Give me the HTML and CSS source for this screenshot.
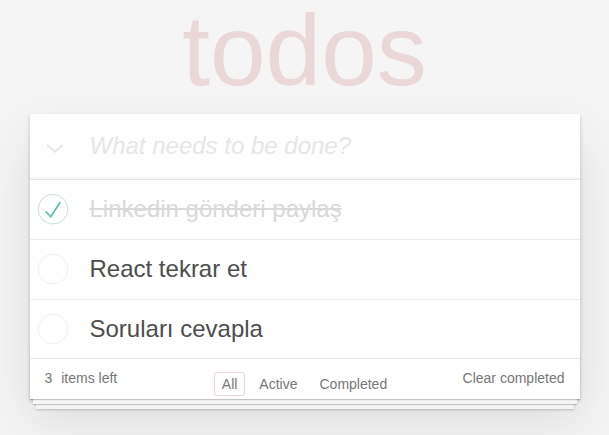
FILE: index.html
```html
<!DOCTYPE html>
<html lang="tr">
<head>
<meta charset="utf-8">
<title>todos</title>
<link rel="stylesheet" href="styles.css">
</head>
<body>
<div class="app">
  <h1 class="title">todos</h1>
  <section class="card">
    <header class="header">
      <div class="toggle-all">
        <svg width="18" height="9" viewBox="0 0 18 9"><polyline points="1,1 9,7.5 17,1" fill="none" stroke="#e6e6e6" stroke-width="2.2"/></svg>
      </div>
      <input class="new-todo" placeholder="What needs to be done?">
    </header>
    <ul class="todo-list">
      <li class="todo completed">
        <svg class="check" width="40" height="40" viewBox="-10 -18 100 135"><circle cx="50" cy="50" r="50" fill="none" stroke="#bddad5" stroke-width="3"/><path fill="#5dc2af" d="M72 25L42 71 27 56l-4 4 20 20 34-52z"/></svg>
        <span class="label">Linkedin gönderi paylaş</span>
      </li>
      <li class="todo">
        <svg class="check" width="40" height="40" viewBox="-10 -18 100 135"><circle cx="50" cy="50" r="50" fill="none" stroke="#ededed" stroke-width="3"/></svg>
        <span class="label">React tekrar et</span>
      </li>
      <li class="todo">
        <svg class="check" width="40" height="40" viewBox="-10 -18 100 135"><circle cx="50" cy="50" r="50" fill="none" stroke="#ededed" stroke-width="3"/></svg>
        <span class="label">Soruları cevapla</span>
      </li>
    </ul>
    <footer class="footer">
      <span class="todo-count"><strong>3</strong> items left</span>
      <ul class="filters">
        <li><a class="selected" href="#/">All</a></li>
        <li><a href="#/active">Active</a></li>
        <li><a href="#/completed">Completed</a></li>
      </ul>
      <span class="clear-completed">Clear completed</span>
    </footer>
  </section>
</div>
</body>
</html>
```
FILE: styles.css
```css
html {
  margin: 0;
  padding: 0;
  background: #f5f5f5;
  min-height: 100%;
}
body {
  margin: 0;
  padding: 0;
  min-height: 100vh;
  background: #f5f5f5;
  font-family: "Liberation Sans", Arial, sans-serif;
  font-size: 14px;
  color: #4d4d4d;
  font-weight: 300;
}
.app {
  width: 550px;
  margin: 0 auto;
  padding-bottom: 40px;
}
.title {
  margin: 0 0 14px 0;
  font-size: 100px;
  line-height: 100px;
  font-weight: 100;
  text-align: center;
  color: rgba(175, 47, 47, 0.15);
}
.card {
  position: relative;
  background: #fff;
  box-shadow: 0 2px 4px 0 rgba(0, 0, 0, 0.2), 0 25px 50px 0 rgba(0, 0, 0, 0.1);
}
.header {
  display: flex;
  align-items: flex-start;
  height: 65px;
  box-shadow: inset 0 -2px 1px rgba(0, 0, 0, 0.03);
  background: rgba(0, 0, 0, 0.003);
}
.toggle-all {
  width: 60px;
  flex: none;
  padding-top: 30px;
  box-sizing: border-box;
  padding-left: 16px;
  display: flex;
}
.new-todo {
  flex: 1;
  min-width: 0;
  height: 65px;
  box-sizing: border-box;
  padding: 15px 16px 16px 0;
  margin: 0;
  border: none;
  outline: none;
  background: transparent;
  font-family: inherit;
  font-size: 24px;
  line-height: 1.4em;
  font-weight: 300;
  color: inherit;
}
.new-todo::placeholder {
  font-style: italic;
  font-weight: 300;
  color: #e6e6e6;
}
.todo-list {
  list-style: none;
  margin: 0;
  padding: 0;
  border-top: 1px solid #e6e6e6;
}
.todo {
  display: flex;
  align-items: center;
  border-bottom: 1px solid #ededed;
  font-size: 24px;
}
.todo:last-child {
  border-bottom: none;
}
.check {
  flex: none;
  display: block;
}
.label {
  padding: 15px 15px 15px 20px;
  line-height: 1.2;
  color: #4d4d4d;
}
.completed .label {
  color: #d9d9d9;
  text-decoration: line-through;
}
.footer {
  position: relative;
  display: grid;
  grid-template-columns: 1fr auto 1fr;
  grid-template-rows: 20px;
  align-items: start;
  height: 20px;
  padding: 10px 15px;
  border-top: 1px solid #e6e6e6;
  color: #777;
  line-height: 18px;
}
.footer::before {
  content: '';
  position: absolute;
  right: 0;
  bottom: 0;
  left: 0;
  height: 50px;
  overflow: hidden;
  box-shadow: 0 1px 1px rgba(0, 0, 0, 0.2),
              0 8px 0 -3px #f6f6f6,
              0 9px 1px -3px rgba(0, 0, 0, 0.2),
              0 16px 0 -6px #f6f6f6,
              0 17px 2px -6px rgba(0, 0, 0, 0.2);
}
.todo-count {
  justify-self: start;
}
.todo-count strong {
  font-weight: 300;
  margin-right: 5px;
}
.filters {
  list-style: none;
  margin: 0;
  padding: 0;
  display: flex;
}
.filters a {
  display: block;
  margin: 3px;
  padding: 3px 7px;
  border: 1px solid transparent;
  border-radius: 3px;
  color: inherit;
  text-decoration: none;
  line-height: 16px;
}
.filters a.selected {
  border-color: rgba(175, 47, 47, 0.2);
}
.clear-completed {
  justify-self: end;
  position: relative;
}
```
